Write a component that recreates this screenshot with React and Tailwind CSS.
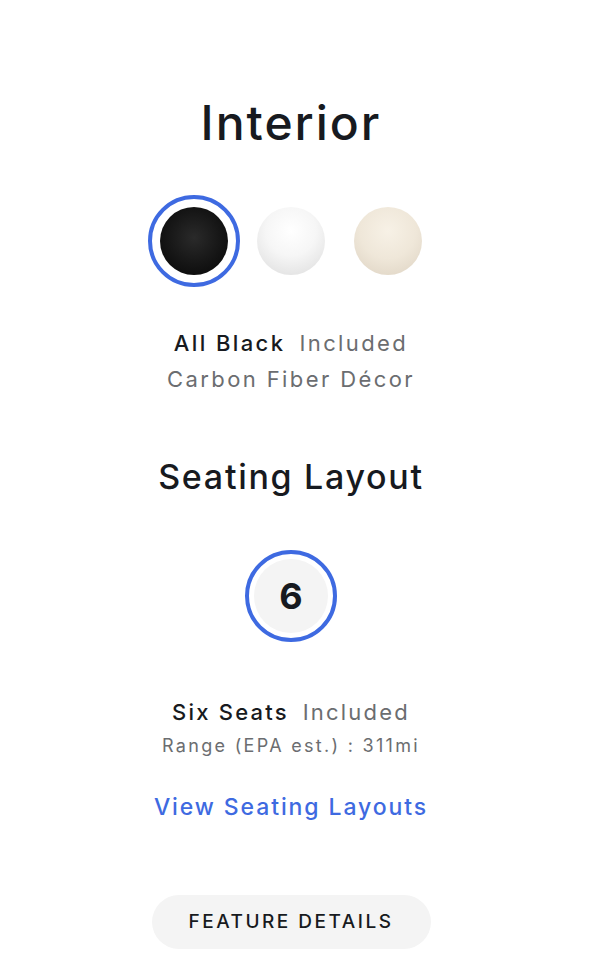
import React from "react";

function Swatch({ selected, fill }) {
  return (
    <div
      className={`w-[92px] h-[92px] rounded-full flex items-center justify-center ${
        selected ? "border-[4px] border-[#3e6ae1]" : ""
      }`}
    >
      <div className={`w-[68px] h-[68px] rounded-full ${fill}`} />
    </div>
  );
}

export default function App() {
  return (
    <div className="w-[602px] min-h-[963px] bg-white pr-[20px] flex flex-col items-center text-[#171a20] font-['Inter',sans-serif]">
      <h1 className="mt-[95px] text-[48px] leading-[56px] font-medium tracking-[2px]">Interior</h1>

      <div className="mt-[44px] flex gap-[5px]">
        <Swatch
          selected
          fill="bg-[radial-gradient(circle_at_50%_45%,#2a2a2a_0%,#151515_55%,#050505_100%)]"
        />
        <Swatch fill="bg-[radial-gradient(circle_at_50%_35%,#ffffff_0%,#f6f6f6_45%,#e2e2e2_85%,#d0d0d0_100%)]" />
        <Swatch fill="bg-[radial-gradient(circle_at_50%_35%,#f7f1e6_0%,#efe7d9_50%,#e2d8c8_85%,#d4c9b8_100%)]" />
      </div>

      <div className="mt-[38px] flex flex-col items-center">
        <div className="text-[22px] leading-[36px] tracking-[2.4px]">
          <span className="font-medium">All Black</span>
          <span className="ml-[14px] text-[#6b6d70]">Included</span>
        </div>
        <div className="text-[22px] leading-[36px] tracking-[2.4px] text-[#6b6d70]">Carbon Fiber Décor</div>
      </div>

      <h2 className="mt-[58px] text-[34px] leading-[44px] font-medium tracking-[1.7px]">Seating Layout</h2>

      <div className="mt-[51px] w-[92px] h-[92px] rounded-full border-[4px] border-[#3e6ae1] p-[5px]">
        <div className="w-full h-full rounded-full bg-[#f4f4f4] flex items-center justify-center text-[36px] font-bold">
          6
        </div>
      </div>

      <div className="mt-[53px] flex flex-col items-center">
        <div className="text-[22px] leading-[34px] tracking-[2.2px]">
          <span className="font-medium">Six Seats</span>
          <span className="ml-[14px] text-[#6b6d70]">Included</span>
        </div>
        <div className="text-[18px] leading-[34px] tracking-[2.3px] text-[#6b6d70]">Range (EPA est.) : 311mi</div>
      </div>

      <a className="mt-[26px] text-[23px] leading-[36px] font-medium tracking-[1.9px] text-[#3e6ae1]">View Seating Layouts</a>

      <button className="mt-[70px] w-[279px] h-[54px] rounded-full bg-[#f4f4f4] text-[19px] font-medium tracking-[2.5px] text-[#171a20]">
        FEATURE DETAILS
      </button>
    </div>
  );
}
